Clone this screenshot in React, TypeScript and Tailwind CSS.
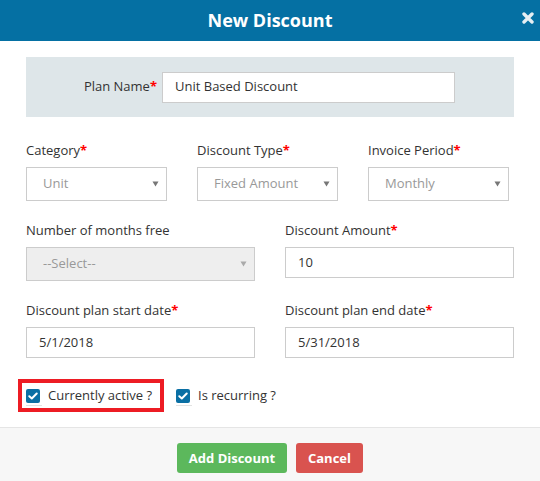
import React from 'react';

const Req = () => <span className="text-[#ff0000] font-bold">*</span>;

function Label({ text, required }: { text: string; required?: boolean }) {
  return (
    <label className="block text-[13px] leading-[18px] text-[#333] mb-[8px]">
      {text}
      {required && <Req />}
    </label>
  );
}

function Select({ value, disabled }: { value: string; disabled?: boolean }) {
  return (
    <div
      className={`h-[34px] border border-[#ccc] flex items-center justify-between pl-[16px] pr-[7px] text-[13px] text-[#999] ${
        disabled ? 'bg-[#eeeeee]' : 'bg-white'
      }`}
    >
      <span>{value}</span>
      <svg width="7" height="6" viewBox="0 0 7 6">
        <polygon points="0.5,0.5 6.5,0.5 3.5,5.5" fill={disabled ? '#aaa' : '#777'} />
      </svg>
    </div>
  );
}

function TextInput({ value, className = '' }: { value: string; className?: string }) {
  return (
    <div className={`h-[31px] border border-[#ccc] bg-white flex items-center pl-[12px] text-[13px] text-[#333] ${className}`}>
      {value}
    </div>
  );
}

function Check({ label }: { label: string }) {
  return (
    <div className="flex items-center gap-[8px]">
      <div className="relative">
        <div className="w-[14px] h-[14px] rounded-[2px] bg-[#0a6fa4] flex items-center justify-center">
          <svg width="10" height="8" viewBox="0 0 10 8">
            <path d="M1.3 4.2 L3.8 6.5 L8.7 1.5" fill="none" stroke="#fff" strokeWidth="2" strokeLinecap="round" strokeLinejoin="round" />
          </svg>
        </div>
        <div className="absolute left-0 top-[16px] w-[16px] h-[1px] bg-[#e2e2e2]" />
      </div>
      <span className="text-[13px] text-[#333]">{label}</span>
    </div>
  );
}

export default function App() {
  return (
    <div className="w-[540px] h-[481px] bg-white flex flex-col" style={{ fontFamily: '"Open Sans", "Liberation Sans", sans-serif' }}>
      {/* header */}
      <div className="relative h-[41px] bg-[#0570a3] flex items-center justify-center">
        <span className="text-white text-[18px] font-bold">New Discount</span>
        <svg className="absolute right-[6px] top-[12px]" width="12" height="12" viewBox="0 0 12 12">
          <path d="M2 2 L10 10 M10 2 L2 10" stroke="#e6eef3" strokeWidth="3.4" strokeLinecap="round" />
        </svg>
      </div>

      {/* body */}
      <div className="px-[26px] pt-[16px]">
        <div className="h-[60px] bg-[#dee6e9] flex items-center">
          <div className="w-[131px] text-right text-[13px] text-[#333]">
            Plan Name<Req />
          </div>
          <TextInput value="Unit Based Discount" className="ml-[5px] w-[293px]" />
        </div>

        <div className="grid grid-cols-[141px_141px_141px] gap-x-[30px] mt-[24px]">
          <div>
            <Label text="Category" required />
            <Select value="Unit" />
          </div>
          <div>
            <Label text="Discount Type" required />
            <Select value="Fixed Amount" />
          </div>
          <div>
            <Label text="Invoice Period" required />
            <Select value="Monthly" />
          </div>
        </div>

        <div className="grid grid-cols-2 gap-x-[30px] mt-[20px] items-start">
          <div>
            <Label text="Number of months free" />
            <Select value="--Select--" disabled />
          </div>
          <div>
            <Label text="Discount Amount" required />
            <TextInput value="10" />
          </div>
        </div>

        <div className="grid grid-cols-2 gap-x-[30px] mt-[20px]">
          <div>
            <Label text="Discount plan start date" required />
            <TextInput value="5/1/2018" />
          </div>
          <div>
            <Label text="Discount plan end date" required />
            <TextInput value="5/31/2018" />
          </div>
        </div>

        <div className="flex items-center mt-[21px] -ml-[8px]">
          <div className="h-[33px] border-4 border-[#ed1c24] flex items-center pl-[4px] pr-[8px]">
            <Check label="Currently active ?" />
          </div>
          <div className="ml-[12px]">
            <Check label="Is recurring ?" />
          </div>
        </div>
      </div>

      {/* footer */}
      <div className="mt-[15px] flex-1 border-t border-[#e5e5e5] bg-[#f7f7f7] flex justify-center gap-[9px] pt-[15px]">
        <button className="h-[30px] w-[110px] rounded-[3px] bg-[#5cb85c] text-white text-[13px] font-bold pt-[1px]">Add Discount</button>
        <button className="h-[30px] w-[67px] rounded-[3px] bg-[#d9534f] text-white text-[13px] font-bold pt-[1px]">Cancel</button>
      </div>
    </div>
  );
}
